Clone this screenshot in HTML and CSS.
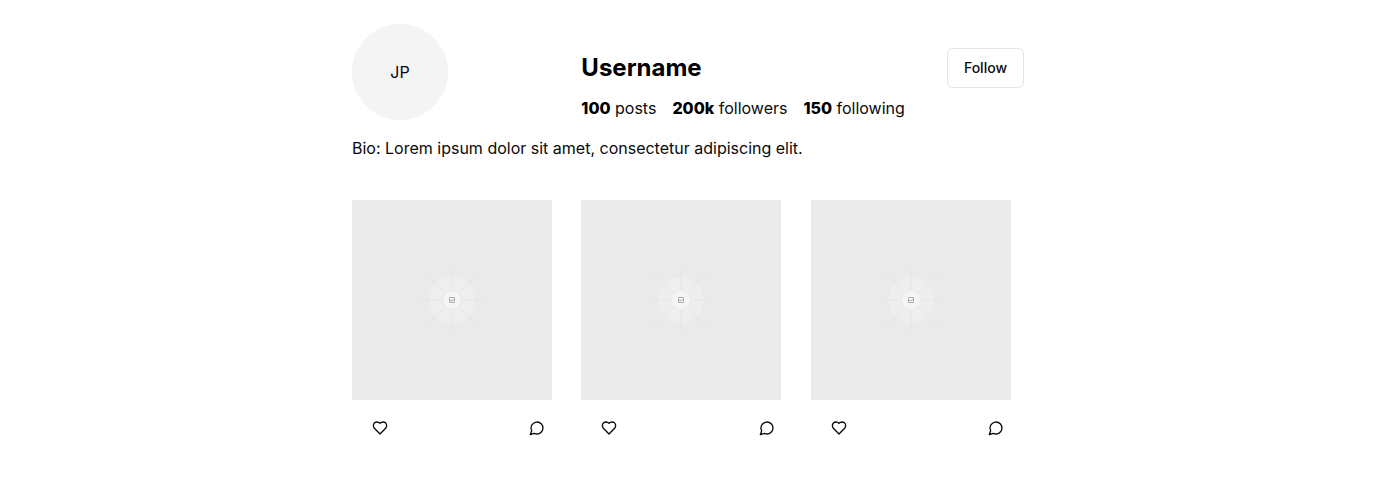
FILE: index.html
```html
<!DOCTYPE html>
<html lang="en">
<head>
<meta charset="utf-8">
<meta name="viewport" content="width=device-width, initial-scale=1">
<title>Username</title>
<link rel="stylesheet" href="styles.css">
</head>
<body>
<svg class="sprite" aria-hidden="true">
  <symbol id="placeholder" viewBox="0 0 200 200">
    <rect width="200" height="200" fill="#eaeaea"/>
    <circle cx="100" cy="100" r="23" fill="#eeeeee"/>
    <path d="M100 71v58M71 100h58M73 73l54 54M127 73l-54 54" stroke="#e5e5e5" fill="none"/>
    <circle cx="100" cy="100" r="9.5" fill="#f5f5f5" stroke="#ebebeb"/>
    <path d="M97.500 97.500h5v5h-5zM97.500 101.500l1.500-1.500 1 1 2.500-2.500" stroke="#adadad" fill="none"/>
  </symbol>
  <symbol id="heart" viewBox="0 0 24 24">
    <path d="M19 14c1.490-1.460 3-3.210 3-5.500A5.500 5.500 0 0 0 16.500 3c-1.760 0-3 .5-4.500 2-1.500-1.500-2.740-2-4.500-2A5.500 5.500 0 0 0 2 8.500c0 2.300 1.500 4.050 3 5.500l7 7Z"/>
  </symbol>
  <symbol id="comment" viewBox="0 0 24 24">
    <path d="M7.900 20A9 9 0 1 0 4 16.100L2 22Z"/>
  </symbol>
</svg>
<main class="profile">
  <header class="profile-header">
    <div class="avatar">JP</div>
    <div class="details">
      <div class="title-row">
        <h1 class="username">Username</h1>
        <button class="follow" type="button">Follow</button>
      </div>
      <div class="stats">
        <div><strong>100</strong> posts</div>
        <div><strong>200k</strong> followers</div>
        <div><strong>150</strong> following</div>
      </div>
    </div>
  </header>
  <p class="bio">Bio: Lorem ipsum dolor sit amet, consectetur adipiscing elit.</p>
  <section class="posts" aria-label="Posts">
    <article>
      <svg class="photo" role="img" aria-label="Post image"><use href="#placeholder"/></svg>
      <div class="actions">
        <button class="icon-button" type="button" aria-label="Like"><svg class="icon"><use href="#heart"/></svg></button>
        <button class="icon-button" type="button" aria-label="Comment"><svg class="icon"><use href="#comment"/></svg></button>
      </div>
    </article>
    <article>
      <svg class="photo" role="img" aria-label="Post image"><use href="#placeholder"/></svg>
      <div class="actions">
        <button class="icon-button" type="button" aria-label="Like"><svg class="icon"><use href="#heart"/></svg></button>
        <button class="icon-button" type="button" aria-label="Comment"><svg class="icon"><use href="#comment"/></svg></button>
      </div>
    </article>
    <article>
      <svg class="photo" role="img" aria-label="Post image"><use href="#placeholder"/></svg>
      <div class="actions">
        <button class="icon-button" type="button" aria-label="Like"><svg class="icon"><use href="#heart"/></svg></button>
        <button class="icon-button" type="button" aria-label="Comment"><svg class="icon"><use href="#comment"/></svg></button>
      </div>
    </article>
  </section>
</main>
</body>
</html>
```
FILE: styles.css
```css
* {
  box-sizing: border-box;
}

body {
  margin: 0;
  background: #fff;
  color: #09090b;
  font-family: Inter, "Liberation Sans", sans-serif;
  font-size: 16px;
  line-height: 24px;
}

.sprite {
  display: none;
}

.profile {
  max-width: 672px;
  margin: 0 auto;
  padding: 24px 0;
}

.profile-header,
.posts {
  display: grid;
  grid-template-columns: repeat(3, 1fr);
  gap: 16px;
}

.profile-header {
  align-items: end;
}

.avatar {
  display: flex;
  align-items: center;
  justify-content: center;
  width: 96px;
  height: 96px;
  border-radius: 50%;
  background: #f4f4f4;
}

.details {
  display: grid;
  grid-column: span 2;
  gap: 8px;
}

.title-row {
  display: flex;
  align-items: center;
  justify-content: space-between;
}

.username {
  margin: 0;
  color: #000;
  font-size: 24px;
  font-weight: 700;
  line-height: 32px;
}

.follow {
  height: 40px;
  padding: 0 16px;
  border: 1px solid #e4e4e7;
  border-radius: 6px;
  background: #fff;
  color: inherit;
  font: 500 14px/20px Inter, "Liberation Sans", sans-serif;
}

.stats {
  display: flex;
  gap: 16px;
}

.stats strong {
  color: #000;
  font-weight: 800;
}

.bio {
  margin: 16px 0 40px;
}

.photo {
  display: block;
  width: 200px;
  height: 200px;
}

.actions {
  display: flex;
  justify-content: space-between;
  padding: 8px;
}

.icon-button {
  display: flex;
  align-items: center;
  justify-content: center;
  width: 40px;
  height: 40px;
  padding: 0;
  border: 0;
  border-radius: 6px;
  background: transparent;
  color: inherit;
}

.icon {
  width: 16px;
  height: 16px;
  fill: none;
  stroke: currentColor;
  stroke-width: 2;
  stroke-linecap: round;
  stroke-linejoin: round;
}
```
